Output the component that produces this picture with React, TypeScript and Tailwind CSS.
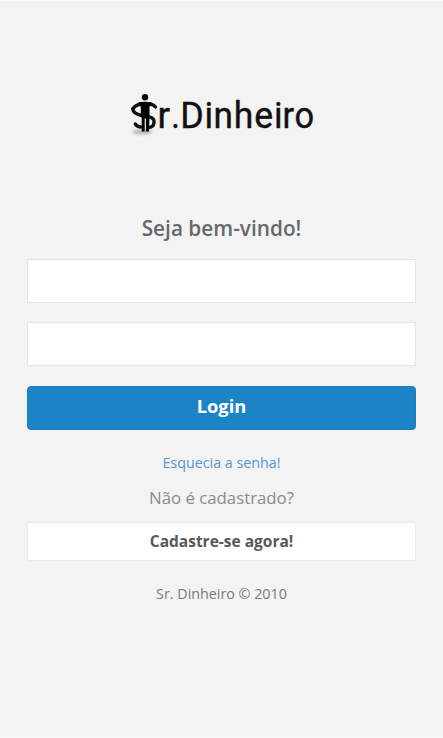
const wordmark: [string, number, number][] = [
  ['r', 157.4, 1], ['.', 171.2, 0.88], ['D', 180.2, 0.97], ['i', 204.4, 0.96], ['n', 213.4, 0.95], ['h', 233.7, 0.96], ['e', 254.2, 0.96], ['i', 274.0, 0.95], ['r', 282.6, 0.93], ['o', 294.4, 0.93],
];

function Logo() {
  return (
    <svg className="h-[50px] w-[190px]" viewBox="127 88 190 50" role="img" aria-label="Sr.Dinheiro">
      <defs>
        <filter id="shade" x="-30%" y="-100%" width="160%" height="300%"><feGaussianBlur stdDeviation="1.6" /></filter>
      </defs>
      <ellipse cx="142.500" cy="132" rx="10" ry="2.500" fill="#777" opacity=".5" filter="url(#shade)" />
      <path d="M155.500 107C153 104 149.500 103.500 145 103.500s-8.500.5-12.300 5.200c.3 4.300 4 5.800 8.800 6.800M149 116.800c4 .8 5.500 3 5 6-.5 3.400-2.500 4.700-5.500 4.700M141 127c-2.500 0-4.300-1-5.700-3" fill="none" stroke="#111" strokeWidth="3.400" strokeLinecap="round" />
      <circle cx="145" cy="97.300" r="3.200" fill="#000" />
      <path d="M138.500 102h13l-2 5v10.500l-.6 14h-3v-13h-1.200v13h-3v-14l-.9-.8V107z" fill="#000" />
    </svg>
  );
}

export default function App() {
  return (
    <main className="flex h-[738px] w-[443px] flex-col items-center border-t border-b border-[#fafafa] bg-[#f3f3f3] px-[27px] font-['Open_Sans','Noto_Sans',sans-serif]">
      <div className="relative mt-[87px] h-[50px] w-[190px]">
        <Logo />
        <svg className="absolute inset-0 h-[50px] w-[190px] font-['Roboto',sans-serif]" viewBox="127 88 190 50" fill="#111" stroke="#111" strokeWidth=".4">
          {wordmark.map(([c, x, s], i) => (
            <text key={i} transform={`translate(${x} 128) scale(${s} 1)`} fontSize="37">{c}</text>
          ))}
        </svg>
      </div>
      <h1 className="mt-[74px] text-[20.8px] leading-8 font-semibold whitespace-nowrap text-[#65686b]">Seja bem-vindo!</h1>
      <form className="mt-[15px] flex w-full flex-col items-center" onSubmit={(e) => e.preventDefault()}>
        <input aria-label="Usuário" className="h-11 w-full border border-[#e5e5e5] bg-white px-3 outline-none" />
        <input type="password" aria-label="Senha" className="mt-[19px] h-11 w-full border border-[#e5e5e5] bg-white px-3 outline-none" />
        <button className="mt-5 h-11 w-full rounded-[4px] border border-[#1980c2] bg-[#1c83c6] pb-[5px] text-[18.3px] font-bold text-white">Login</button>
      </form>
      <a href="#" className="mt-[23px] text-[14.3px] leading-5 whitespace-nowrap text-[#5396d2]">Esquecia a senha!</a>
      <p className="mt-[13px] text-[16.8px] leading-6 whitespace-nowrap text-[#8b8b8b]">Não é cadastrado?</p>
      <button className="mt-3 h-[39px] w-full rounded-[2px] border border-[#e9ebeb] bg-white pt-px text-[15.5px] font-bold text-[#56585b]">Cadastre-se agora!</button>
      <footer className="mt-[23px] text-[14.3px] leading-5 whitespace-nowrap text-[#77797b]">Sr. Dinheiro © 2010</footer>
    </main>
  );
}
